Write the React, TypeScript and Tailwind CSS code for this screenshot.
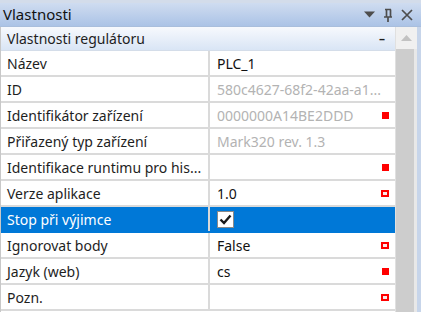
import React from 'react';

type Marker = 'none' | 'filled' | 'hollow';

interface PropRow {
  label: string;
  value?: string;
  muted?: boolean;
  marker: Marker;
  checkbox?: boolean;
  selected?: boolean;
}

const rows: PropRow[] = [
  { label: 'Název', value: 'PLC_1', marker: 'none' },
  { label: 'ID', value: '580c4627-68f2-42aa-a1...', muted: true, marker: 'none' },
  { label: 'Identifikátor zařízení', value: '0000000A14BE2DDD', muted: true, marker: 'filled' },
  { label: 'Přiřazený typ zařízení', value: 'Mark320 rev. 1.3', muted: true, marker: 'none' },
  { label: 'Identifikace runtimu pro his...', value: '', marker: 'filled' },
  { label: 'Verze aplikace', value: '1.0', marker: 'hollow' },
  { label: 'Stop při výjimce', checkbox: true, selected: true, marker: 'none' },
  { label: 'Ignorovat body', value: 'False', marker: 'hollow' },
  { label: 'Jazyk (web)', value: 'cs', marker: 'filled' },
  { label: 'Pozn.', value: '', marker: 'hollow' },
];

const MarkerBox = ({ kind }: { kind: Marker }) => {
  if (kind === 'filled') return <span className="block w-[7px] h-[7px] bg-[#ff0000]" />;
  if (kind === 'hollow')
    return <span className="block w-[8px] h-[7px] border-2 border-[#ff0000] bg-[#fbe9e9]" />;
  return null;
};

const App = () => {
  return (
    <div
      className="w-[421px] h-[312px] overflow-hidden bg-white flex flex-col text-[14px] text-[#1e1e1e]"
      style={{ fontFamily: '"Noto Sans", "Open Sans", sans-serif' }}
    >
      {/* top strip */}
      <div className="h-[3px] bg-[#d3dcea]" />

      {/* title bar */}
      <div className="h-[24px] flex items-center justify-between pl-[3px] pr-[8px] bg-gradient-to-b from-[#cfdcf0] to-[#abc3e6] border-b border-[#a9bedc]">
        <span className="text-[15px] text-[#111]">Vlastnosti</span>
        <div className="flex items-center gap-[8px]">
          <svg width="11" height="7" viewBox="0 0 11 7">
            <path d="M0 0.5 H11 L5.5 6.5 Z" fill="#4d4d4d" />
          </svg>
          <svg width="10" height="14" viewBox="0 0 10 14">
            <path d="M2 1.5 H8 M3.5 1.5 V9 M7.5 1.5 V9 M1 9 H9 M5 9 V14" stroke="#4d4d4d" strokeWidth="1.7" fill="none" />
          </svg>
          <svg width="12" height="12" viewBox="0 0 12 12">
            <path d="M1 1 L11 11 M11 1 L1 11" stroke="#4d4d4d" strokeWidth="1.7" />
          </svg>
        </div>
      </div>

      <div className="flex flex-1 min-h-0">
        {/* grid */}
        <div className="w-[395px] flex flex-col border-l border-[#c8c8c8]">
          <div className="h-[24px] shrink-0 flex items-center justify-between pl-[6px] pr-[10px] bg-gradient-to-b from-[#f7f9fd] to-[#d9e5f5] border-b border-[#d4dde9]">
            <span>Vlastnosti regulátoru</span>
            <span className="text-[12px] font-bold leading-none">–</span>
          </div>
          {rows.map((r) => (
            <div
              key={r.label}
              className={`h-[26px] shrink-0 flex border-b-2 ${r.selected ? 'bg-[#0078d7] border-[#0078d7] text-white' : 'border-[#dadada]'}`}
            >
              <div
                className={`w-[209px] shrink-0 flex items-center pl-[6px] pt-[1px] whitespace-nowrap overflow-hidden border-r-2 ${r.selected ? 'border-[#d8d8d8]' : 'border-[#dadada]'}`}
              >
                {r.label}
              </div>
              <div className="flex-1 flex items-center justify-between pl-[7px] pr-[6px]">
                {r.checkbox ? (
                  <span className="w-[17px] h-[17px] bg-white border border-[#8a8a8a] flex items-center justify-center">
                    <svg width="13" height="11" viewBox="0 0 13 11">
                      <path d="M1.5 5.5 L5 9 L11.5 1.5" stroke="#1a1a1a" strokeWidth="2.4" fill="none" />
                    </svg>
                  </span>
                ) : (
                  <span className={`whitespace-nowrap pt-[1px] ${r.muted ? 'text-[#b3b3b3]' : 'text-[#111]'}`}>{r.value}</span>
                )}
                <MarkerBox kind={r.marker} />
              </div>
            </div>
          ))}
        </div>

        {/* scrollbar */}
        <div className="w-[22px] flex flex-col bg-[#e8e8e8] border-l border-[#e0e0e0]">
          <div className="h-[22px] bg-[#f0f0f0] flex items-center justify-center">
            <svg width="11" height="6" viewBox="0 0 11 6">
              <path d="M0 6 L5.5 0 L11 6 Z" fill="#c2c2c2" />
            </svg>
          </div>
          <div className="flex-1 bg-[#cdcdcd] mr-[3px]" />
        </div>

        {/* right border */}
        <div className="w-[4px] bg-[#c7d5ea]" />
      </div>
    </div>
  );
};

export default App;
